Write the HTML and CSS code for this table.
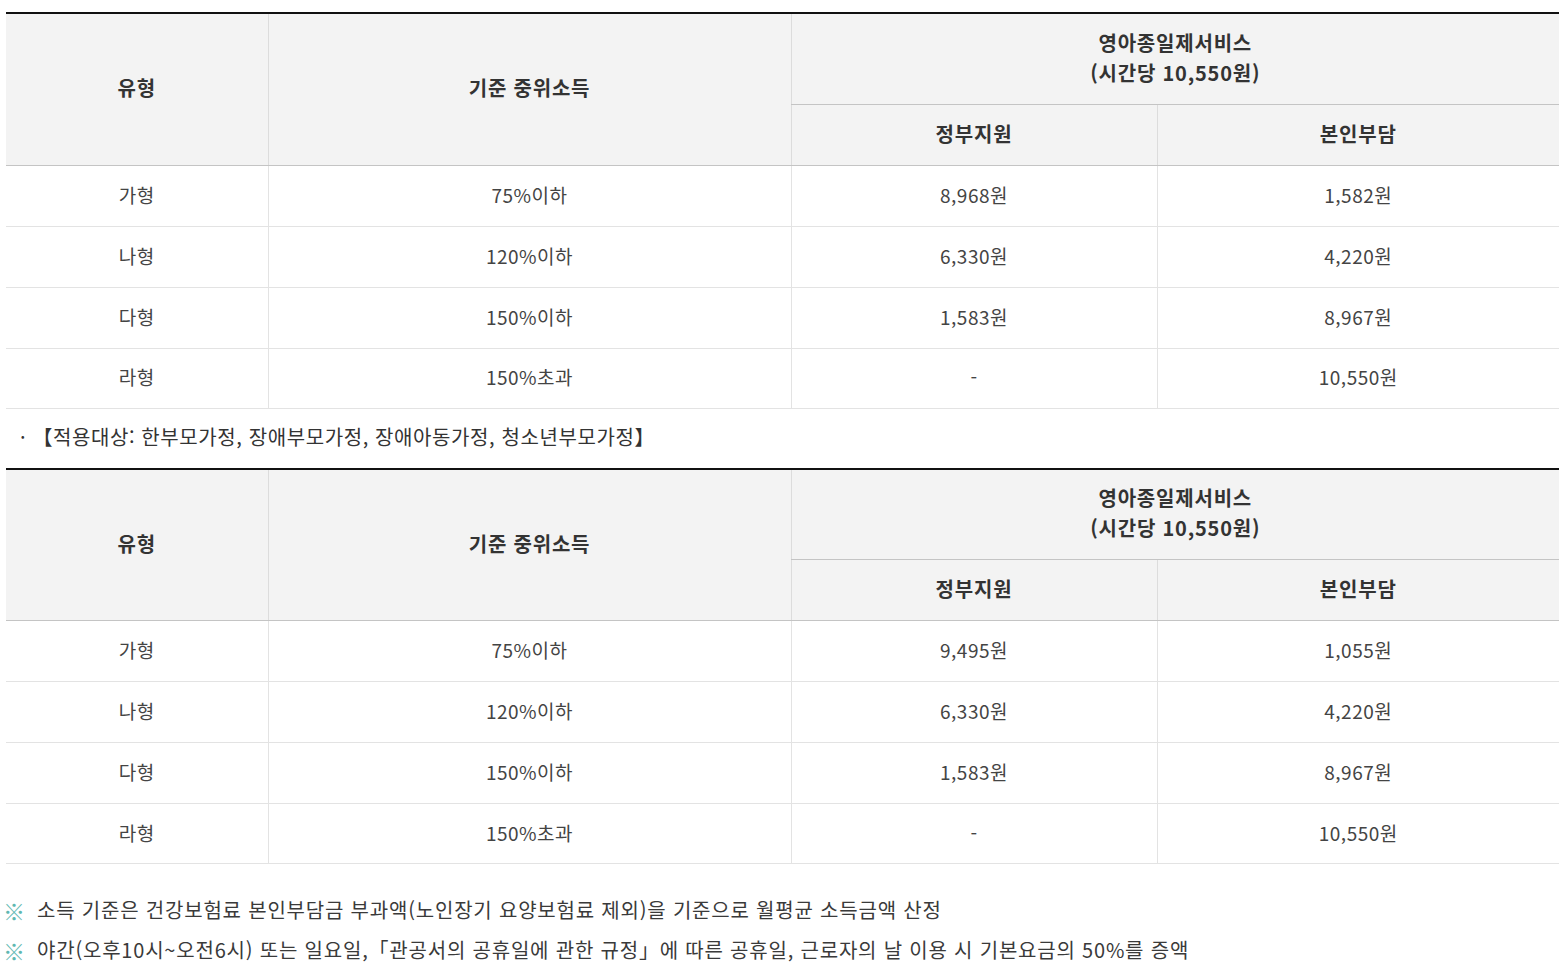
FILE: index.html
```html
<!DOCTYPE html>
<html lang="ko">
<head>
<meta charset="utf-8">
<title>영아종일제서비스</title>
<link rel="stylesheet" href="styles.css">
</head>
<body>
<div class="page">
  <table class="fee">
    <colgroup><col class="c1"><col class="c2"><col class="c3"><col class="c4"></colgroup>
    <thead>
      <tr class="h1">
        <th rowspan="2">유형</th>
        <th rowspan="2">기준 중위소득</th>
        <th colspan="2">영아종일제서비스<br>(시간당 10,550원)</th>
      </tr>
      <tr class="h2">
        <th>정부지원</th>
        <th>본인부담</th>
      </tr>
    </thead>
    <tbody>
      <tr><td>가형</td><td>75%이하</td><td>8,968원</td><td>1,582원</td></tr>
      <tr><td>나형</td><td>120%이하</td><td>6,330원</td><td>4,220원</td></tr>
      <tr><td>다형</td><td>150%이하</td><td>1,583원</td><td>8,967원</td></tr>
      <tr><td>라형</td><td>150%초과</td><td>-</td><td>10,550원</td></tr>
    </tbody>
  </table>
  <p class="target">· 【적용대상: 한부모가정, 장애부모가정, 장애아동가정, 청소년부모가정】</p>
  <table class="fee">
    <colgroup><col class="c1"><col class="c2"><col class="c3"><col class="c4"></colgroup>
    <thead>
      <tr class="h1">
        <th rowspan="2">유형</th>
        <th rowspan="2">기준 중위소득</th>
        <th colspan="2">영아종일제서비스<br>(시간당 10,550원)</th>
      </tr>
      <tr class="h2">
        <th>정부지원</th>
        <th>본인부담</th>
      </tr>
    </thead>
    <tbody>
      <tr><td>가형</td><td>75%이하</td><td>9,495원</td><td>1,055원</td></tr>
      <tr><td>나형</td><td>120%이하</td><td>6,330원</td><td>4,220원</td></tr>
      <tr><td>다형</td><td>150%이하</td><td>1,583원</td><td>8,967원</td></tr>
      <tr><td>라형</td><td>150%초과</td><td>-</td><td>10,550원</td></tr>
    </tbody>
  </table>
  <ul class="notes">
    <li><span class="mark">※</span>소득 기준은 건강보험료 본인부담금 부과액(노인장기 요양보험료 제외)을 기준으로 월평균 소득금액 산정</li>
    <li><span class="mark">※</span>야간(오후10시~오전6시) 또는 일요일,「관공서의 공휴일에 관한 규정」에 따른 공휴일, 근로자의 날 이용 시 기본요금의 50%를 증액</li>
  </ul>
</div>
</body>
</html>
```

FILE: styles.css
```css
* { box-sizing: border-box; }
html, body { margin: 0; padding: 0; background: #fff; }
body {
  font-family: "Noto Sans CJK KR", "Noto Sans", sans-serif;
  color: #333;
  font-size: 19px;
}
.page { padding: 12px 2px 0 6px; }
.fee {
  width: 1553px;
  border-collapse: collapse;
  border-top: 2px solid #111;
  table-layout: fixed;
}
.c1 { width: 262px; }
.c2 { width: 523px; }
.c3 { width: 366px; }
.c4 { width: 402px; }
.fee th {
  background: #f3f3f3;
  font-weight: bold;
  font-size: 20px;
  letter-spacing: 0.8px;
  color: #333;
  line-height: 30px;
  text-align: center;
  border-left: 1px solid #dcdcdc;
  border-bottom: 1px solid #c4c4c4;
  padding: 0 0 2px;
}
.fee th:first-child { border-left: none; }
.fee .h2 th:first-child { border-left: 1px solid #dcdcdc; }
.fee .h1 { height: 91px; }
.fee .h2 { height: 61px; }
.fee td {
  height: 61px;
  text-align: center;
  font-size: 19px;
  letter-spacing: 0.5px;
  color: #444;
  border-left: 1px solid #e3e3e3;
  border-bottom: 1px solid #e3e3e3;
  padding: 0 0 3px;
}
.fee td:first-child { border-left: none; }
.fee tbody tr:last-child td { height: 60px; }
.target {
  margin: 0;
  height: 59px;
  padding-left: 14px;
  line-height: 56px;
  font-size: 20px;
  letter-spacing: 0.6px;
  color: #333;
}
.notes {
  list-style: none;
  margin: 26px 0 0 -6px;
  padding: 0;
}
.notes li {
  font-size: 20px;
  letter-spacing: 0.8px;
  line-height: 40px;
  height: 40px;
  color: #3a3a3a;
  white-space: nowrap;
}
.notes .mark {
  color: #5fb8b2;
  font-weight: bold;
  font-size: 22px;
  line-height: 40px;
  vertical-align: top;
  margin-right: 9px;
  display: inline-block;
  width: 28px;
  letter-spacing: 0;
  text-align: center;
}
```
